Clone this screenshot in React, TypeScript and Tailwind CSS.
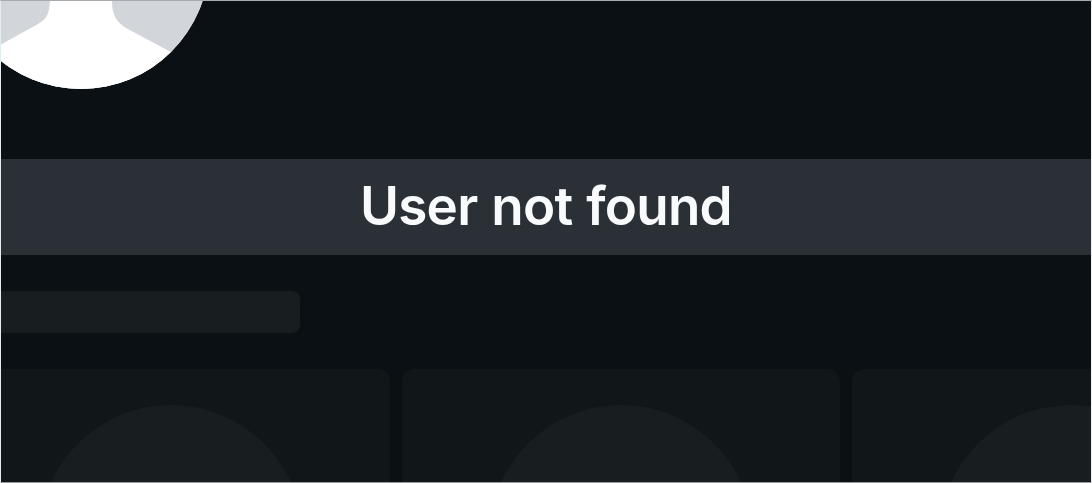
const cards = ['first', 'second', 'third'];

function Avatar() {
  return (
    <div className="-mt-[168px] size-64 shrink-0 overflow-hidden rounded-full bg-white">
      <svg viewBox="0 0 256 256" className="size-full">
        <rect width="256" height="256" fill="#d2d5da" />
        <path
          d="M97 100 V168 C96 181 94 186 85 191 L47 212 Q0 234 0 256 H256 Q256 240 216 218 L173 195 C164 189 159 183 159 168 V100 Z"
          fill="#fff"
        />
      </svg>
    </div>
  );
}

function SkeletonCard() {
  return (
    <div className="flex h-[438px] w-[438px] shrink-0 justify-center rounded-xl bg-[#111619] pt-9">
      <div className="size-[264px] rounded-full bg-[#181d20]" />
    </div>
  );
}

export default function App() {
  return (
    <div className="h-[483px] w-[1092px] overflow-hidden border border-t-[#a5abae] border-r-[#eef1f3] border-b-[#98999c] border-l-[#e3ecef] bg-[#0a1014] font-['Inter','Liberation_Sans',sans-serif]">
      <div className="h-[158px]">
        <div className="-ml-12 flex">
          <Avatar />
        </div>
      </div>
      <div className="flex h-24 items-center justify-center bg-[#2b2f36] pb-px">
        <span className="text-[53px] leading-none font-[560] tracking-[-0.8px] [word-spacing:1.4px] whitespace-nowrap text-[#f9fafb]">
          User not found
        </span>
      </div>
      <div className="mt-9 h-[42px] w-[299px] rounded-r-lg bg-[#181d20]" />
      <div className="mt-9 -ml-[49px] flex gap-3">
        {cards.map((card) => (
          <SkeletonCard key={card} />
        ))}
      </div>
    </div>
  );
}
